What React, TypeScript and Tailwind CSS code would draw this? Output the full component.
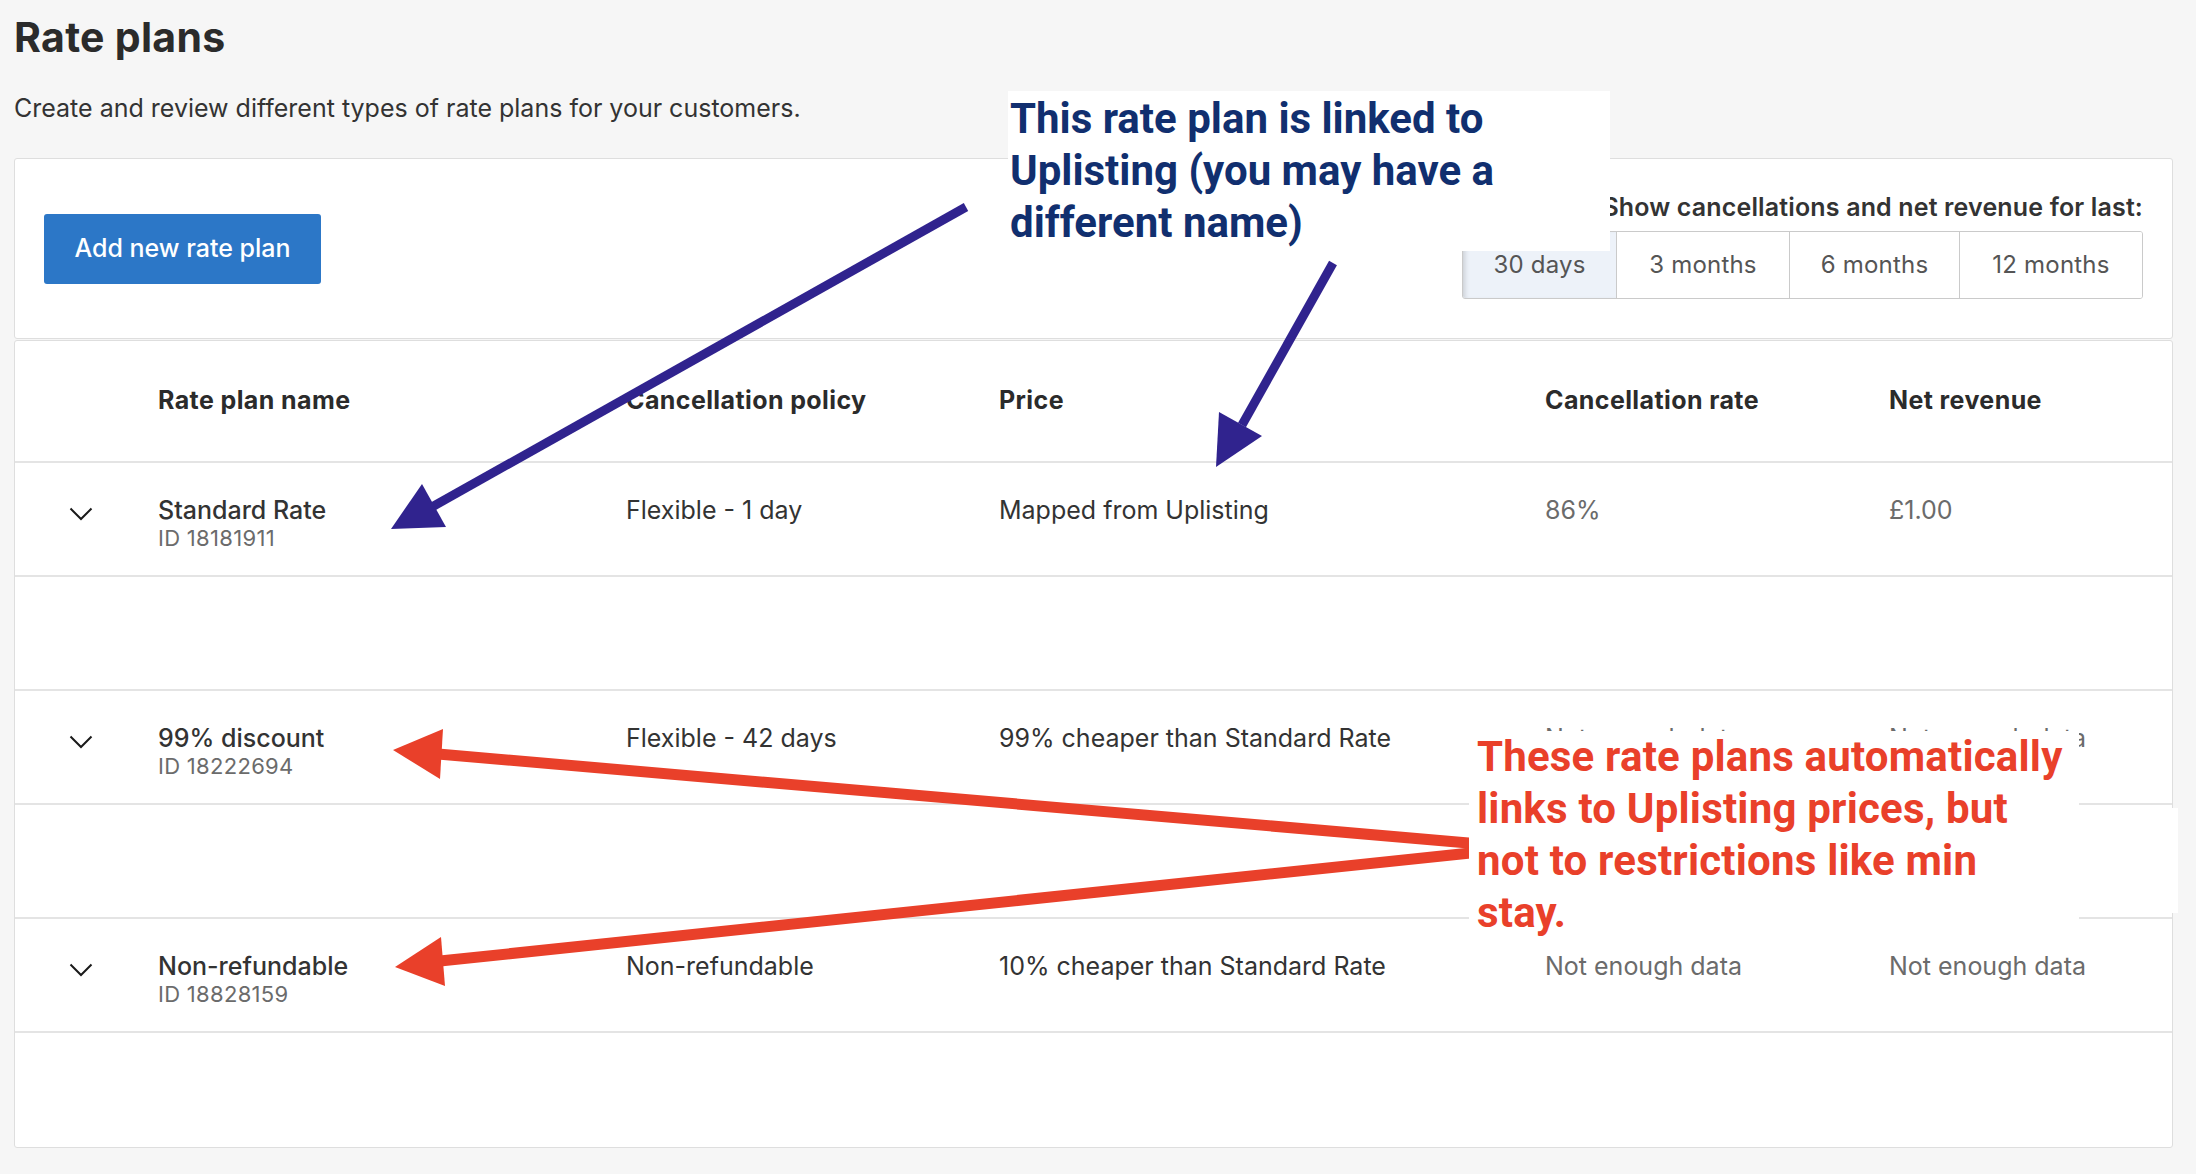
const plans = [
  {
    name: "Standard Rate",
    id: "ID 18181911",
    policy: "Flexible - 1 day",
    price: "Mapped from Uplisting",
    rate: "86%",
    revenue: "£1.00",
  },
  {
    name: "99% discount",
    id: "ID 18222694",
    policy: "Flexible - 42 days",
    price: "99% cheaper than Standard Rate",
    rate: "Not enough data",
    revenue: "Not enough data",
  },
  {
    name: "Non-refundable",
    id: "ID 18828159",
    policy: "Non-refundable",
    price: "10% cheaper than Standard Rate",
    rate: "Not enough data",
    revenue: "Not enough data",
  },
];

const periods = [
  { label: "30 days", width: "w-[153px]", active: true },
  { label: "3 months", width: "w-[173px]", active: false },
  { label: "6 months", width: "w-[170px]", active: false },
  { label: "12 months", width: "w-[183px]", active: false },
];

const cols = "grid grid-cols-[143px_468px_373px_546px_344px_1fr]";

function Chevron() {
  return (
    <svg width="24" height="14" viewBox="0 0 24 14" fill="none">
      <polyline points="1.5,1.5 12,12 22.5,1.5" stroke="#1a1a1a" strokeWidth="2" />
    </svg>
  );
}

function Arrows() {
  return (
    <svg
      className="absolute left-0 top-0 pointer-events-none"
      width="2196"
      height="1174"
      viewBox="0 0 2196 1174"
    >
      {/* blue */}
      <line x1="966" y1="207" x2="432" y2="507" stroke="#30238e" strokeWidth="9" />
      <polygon points="391,529 422,484 446,527" fill="#30238e" />
      <line x1="1333" y1="263" x2="1242" y2="425" stroke="#30238e" strokeWidth="9" />
      <polygon points="1216,467 1219,412 1262,436" fill="#30238e" />
      {/* red */}
      <line x1="1480" y1="844" x2="438" y2="754" stroke="#e9402a" strokeWidth="11" />
      <polygon points="393,750 443,729 440,779" fill="#e9402a" />
      <line x1="1480" y1="852" x2="440" y2="961" stroke="#e9402a" strokeWidth="11" />
      <polygon points="395,967 441,937 445,986" fill="#e9402a" />
    </svg>
  );
}

export default function App() {
  return (
    <div className="relative min-h-screen bg-[#f6f6f6] font-['Inter',sans-serif] text-[#333]">
      <div className="pl-[14px] pr-[23px] pt-[13px]">
        <h1 className="text-[41px] leading-[48px] font-bold tracking-[0.3px] text-[#2b2b2b]">Rate plans</h1>
        <p className="mt-[32px] text-[25px] leading-[30px] text-[#333]">
          Create and review different types of rate plans for your customers.
        </p>

        {/* top bar */}
        <div className="mt-[35px] h-[181px] bg-white border border-[#dedede] rounded-[3px] flex items-center justify-between px-[29px]">
          <button className="w-[277px] h-[70px] rounded-[3px] bg-[#2c77c7] text-white text-[25px] font-medium">
            Add new rate plan
          </button>
          <div className="self-start mt-[34px] flex flex-col items-end">
            <div className="text-[25px] leading-[28px] font-semibold tracking-[0.15px] text-[#333]">
              Show cancellations and net revenue for last:
            </div>
            <div className="mt-[10px] flex border border-[#cacaca] rounded-[3px] overflow-hidden">
              {periods.map((p, i) => (
                <div
                  key={p.label}
                  className={`${p.width} h-[66px] flex items-center justify-center text-[24px] tracking-[0.2px] text-[#555] ${
                    i > 0 ? "border-l border-[#cacaca]" : ""
                  } ${p.active ? "bg-[#edf2f9] shadow-[inset_5px_0_5px_-3px_rgba(0,0,0,0.15)]" : "bg-white"}`}
                >
                  {p.label}
                </div>
              ))}
            </div>
          </div>
        </div>

        {/* table */}
        <div className="mt-px bg-white border border-[#dedede] rounded-[3px]">
          <div className={`${cols} h-[122px] items-center border-b-2 border-[#e4e4e4] text-[25px] font-bold tracking-[0.4px] text-[#2b2b2b]`}>
            <div />
            <div>Rate plan name</div>
            <div>Cancellation policy</div>
            <div>Price</div>
            <div>Cancellation rate</div>
            <div>Net revenue</div>
          </div>
          {plans.map((plan, i) => (
            <div key={plan.id}>
              <div className={`${cols} h-[114px] items-start pt-[33px] border-b-2 border-[#e4e4e4] text-[25px] leading-[28px]`}>
                <div className="pl-[54px] pt-[11px]">
                  <Chevron />
                </div>
                <div>
                  <div className="font-medium text-[#333]">{plan.name}</div>
                  <div className="text-[22px] tracking-[0.3px] text-[#6b6b6b]">{plan.id}</div>
                </div>
                <div className="text-[#333]">{plan.policy}</div>
                <div className="text-[#333]">{plan.price}</div>
                <div className="text-[#6b6b6b]">{plan.rate}</div>
                <div className="text-[#6b6b6b]">{plan.revenue}</div>
              </div>
              <div className={`h-[114px] ${i < plans.length - 1 ? "border-b-2 border-[#e4e4e4]" : ""}`} />
            </div>
          ))}
        </div>
      </div>

      <Arrows />

      {/* annotations */}
      <div className="absolute left-[1008px] top-[91px] w-[602px] h-[160px] bg-white pl-[2px] pt-[2px] font-['Roboto',sans-serif] font-bold text-[42px] leading-[52px] text-[#112f6f] whitespace-nowrap">
        This rate plan is linked to
        <br />
        Uplisting (you may have a
        <br />
        different name)
      </div>
      <div className="absolute left-[1469px] top-[731px] w-[610px] h-[210px] bg-white pl-[8px] font-['Roboto',sans-serif] font-bold text-[42px] leading-[52px] tracking-[0.2px] text-[#e9402a] whitespace-nowrap">
        These rate plans automatically
        <br />
        links to Uplisting prices, but
        <br />
        not to restrictions like min
        <br />
        stay.
      </div>
      <div className="absolute left-[2160px] top-[808px] w-[18px] h-[105px] bg-white" />
    </div>
  );
}
